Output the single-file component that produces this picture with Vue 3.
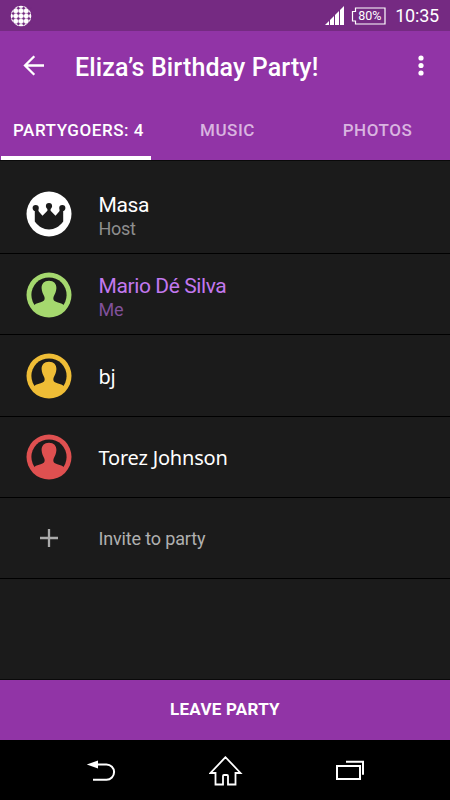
<script setup>
import { ref } from "vue";

const tabs = ["PARTYGOERS: 4", "MUSIC", "PHOTOS"];
const active = ref(0);

const guests = [
    { name: "Masa", role: "Host", color: "white", host: true },
    { name: "Mario Dé Silva", role: "Me", color: "green", me: true },
    { name: "bj", color: "yellow", alt: true },
    { name: "Torez Johnson", color: "red", alt: true },
];
</script>

<template>
    <div class="screen">
        <div class="status">
            <svg class="globe" width="22" height="22" viewBox="0 0 22 22">
                <circle cx="11" cy="11" r="10.3" fill="#fff" />
                <g fill="#752a82">
                    <template v-for="y in [3.2, 8.4, 13.6, 18.8]" :key="y">
                        <circle v-for="x in [3.2, 8.4, 13.6, 18.8]" :key="x" :cx="x" :cy="y" r="1.25" />
                    </template>
                </g>
                <path
                    d="M3.2 0v22M8.4 0v22M13.6 0v22M18.8 0v22M0 3.2h22M0 8.4h22M0 13.6h22M0 18.8h22"
                    stroke="#752a82"
                    stroke-width=".4"
                />
            </svg>
            <svg class="signal" width="20" height="20" viewBox="0 0 20 20" fill="#fff">
                <path d="M0 19l4-4v4zM5 14l4-4v9H5zM10 9l4-4v14h-4zM15 4l4-4v19h-4z" />
            </svg>
            <div class="battery">
                <svg width="36" height="18" viewBox="0 0 36 18" fill="none" stroke="#fff" stroke-width="1.2">
                    <path d="M4.500 1h29.500v16H4.500v-3H1.500v-9.500h3z" />
                </svg>
                <span>80%</span>
            </div>
            <span class="clock">10:35</span>
        </div>

        <header>
            <svg class="back" width="22" height="22" viewBox="0 0 22 22" fill="none" stroke="#fff" stroke-width="2.3">
                <path d="M21 10.500H2M11.300 1.200L2 10.500l9.300 9.300" />
            </svg>
            <h1>Eliza’s Birthday Party!</h1>
            <svg class="more" width="6" height="22" viewBox="0 0 6 22" fill="#fff">
                <circle cx="3" cy="3" r="2.600" />
                <circle cx="3" cy="10.500" r="2.600" />
                <circle cx="3" cy="18" r="2.600" />
            </svg>
        </header>

        <nav class="tabs">
            <button
                v-for="(tab, i) in tabs"
                :key="tab"
                :class="{ active: active === i }"
                @click="active = i"
            >
                {{ tab }}
            </button>
        </nav>

        <ul>
            <li v-for="guest in guests" :key="guest.name" :class="{ me: guest.me }">
                <svg :class="['avatar', guest.color]" width="46" height="46" viewBox="0 0 46 46">
                    <circle cx="23" cy="23" r="22.500" fill="currentColor" />
                    <g v-if="guest.host" fill="#1b1b1b">
                        <circle cx="9.700" cy="17" r="3.100" />
                        <circle cx="23" cy="15" r="3.100" />
                        <circle cx="36.300" cy="17" r="3.100" />
                        <path
                            d="M8.800 18l3-.5 1 3 3.700 4.300 4.900-5V15h3.200v4.800l4.900 5 3.700-4.300 1-3 3 .5v12.500C33 36 28.500 38.400 23 38.400S13 36 8.800 30.500z"
                        />
                    </g>
                    <template v-else>
                        <circle cx="23" cy="23" r="17.600" fill="#1b1b1b" />
                        <path
                            d="M23 8.800c4.800 0 7.600 3 7.400 7.500-.2 3.700-1.700 6-2.700 8.200-.8 1.800-.4 4 1.300 4.700 3 1.500 6.600 1.600 9 4V38l-8 5H16l-8-5v-4.800c2.400-2.400 6-2.500 9-4 1.700-.7 2.100-2.900 1.300-4.700-1-2.200-2.500-4.500-2.700-8.200-.2-4.500 2.600-7.500 7.400-7.500z"
                            fill="currentColor"
                        />
                    </template>
                </svg>
                <div class="info">
                    <span :class="['name', { alt: guest.alt }]">{{ guest.name }}</span>
                    <span v-if="guest.role" class="role">{{ guest.role }}</span>
                </div>
            </li>
            <li class="invite">
                <svg class="avatar" width="46" height="46" viewBox="0 0 46 46" stroke="#aaa" stroke-width="2.300">
                    <path d="M14 23h18M23 14v18" />
                </svg>
                <span>Invite to party</span>
            </li>
        </ul>

        <button class="leave">LEAVE PARTY</button>

        <footer>
            <svg width="30" height="24" viewBox="0 0 30 24">
                <path d="M10 6.500h10.500a7.600 7.600 0 0 1 0 15.200H7" fill="none" stroke="#fff" stroke-width="2" />
                <path d="M.8 6.500L12 2.500v8z" fill="#fff" />
            </svg>
            <svg width="34" height="32" viewBox="0 0 34 32" fill="none" stroke="#fff" stroke-width="1.800">
                <path d="M16.500 3.200L1.500 19h5v11.500H14V22q0-1 1-1h3q1 0 1 1v8.500h7.500V19h5z" />
            </svg>
            <svg width="30" height="22" viewBox="0 0 30 22" fill="none" stroke="#fff" stroke-width="2">
                <path d="M2 7h23v13H2zM11 2.700h17v13" />
            </svg>
        </footer>
    </div>
</template>

<style>
body {
    margin: 0;
    background: #1b1b1b;
}
</style>

<style scoped>
.screen {
    width: 450px;
    height: 800px;
    display: flex;
    flex-direction: column;
    overflow: hidden;
    background: #1b1b1b;
    color: #fff;
    font-family: Roboto, "Noto Sans", sans-serif;
}
.status {
    display: flex;
    align-items: center;
    box-sizing: border-box;
    height: 31px;
    padding: 0 10px;
    background: #752a82;
}
.signal {
    margin-left: auto;
}
.battery {
    position: relative;
    display: flex;
    margin-left: 6px;
}
.battery span {
    position: absolute;
    left: 7px;
    top: 2px;
    font-size: 12.5px;
    line-height: 14px;
}
.clock {
    margin-left: 8px;
    padding: 1px 1px 0 0;
    font-size: 18px;
    line-height: 20px;
    letter-spacing: -0.2px;
}
header {
    display: flex;
    align-items: center;
    height: 69px;
    padding: 0 26px 0 23px;
    background: #9134a6;
}
h1 {
    flex: 1;
    margin: 0 0 0 30px;
    padding-top: 4px;
    font-size: 25px;
    line-height: 30px;
    font-weight: 500;
    letter-spacing: 0.13px;
}
.tabs {
    display: grid;
    grid-template-columns: repeat(3, 150px);
    height: 60px;
    padding-left: 1px;
    background: #9134a6;
}
button {
    border: 0;
    margin: 0;
    background: none;
    font-family: inherit;
}
.tabs button {
    padding: 4px 0 0 3px;
    color: #d9b5e0;
    font-size: 17px;
    font-weight: 500;
    letter-spacing: 0.55px;
    border-bottom: 4px solid transparent;
    white-space: nowrap;
}
.tabs .active {
    padding-left: 5px;
    color: #fff;
    border-color: #fff;
}
ul {
    flex: 1;
    margin: 0;
    padding: 12px 0 0;
    list-style: none;
    border-top: 1px solid #0a0a0a;
    border-bottom: 1px solid #0a0a0a;
}
li {
    display: flex;
    align-items: center;
    box-sizing: border-box;
    height: 81.2px;
    padding-left: 26px;
    border-bottom: 1px solid #000;
}
.avatar {
    margin-top: 1px;
    margin-right: 26.5px;
}
.white {
    color: #fff;
}
.green {
    color: #a5d86e;
}
.yellow {
    color: #efbd36;
}
.red {
    color: #df5050;
}
.info {
    display: flex;
    flex-direction: column;
    padding-top: 7px;
}
.name {
    font-size: 21px;
    line-height: 24px;
    letter-spacing: -0.4px;
}
.name.alt {
    margin-top: -4px;
    font-family: "Noto Sans", sans-serif;
    font-size: 20px;
    letter-spacing: -0.2px;
}
.role {
    color: #8e8e8e;
    font-size: 18px;
    line-height: 23px;
    letter-spacing: -0.3px;
}
.me .name {
    color: #c278ee;
}
.me .role {
    color: #81519b;
}
.invite {
    color: #b0b0b0;
    font-size: 18px;
    letter-spacing: -0.15px;
}
.invite span {
    padding-top: 2px;
}
.leave {
    height: 60px;
    padding-bottom: 3px;
    background: #9134a6;
    color: #fff;
    font-size: 17px;
    font-weight: 700;
    letter-spacing: 0.25px;
}
footer {
    display: flex;
    align-items: center;
    justify-content: space-between;
    height: 60px;
    padding: 0 85px 0 86px;
    background: #000;
}
</style>
